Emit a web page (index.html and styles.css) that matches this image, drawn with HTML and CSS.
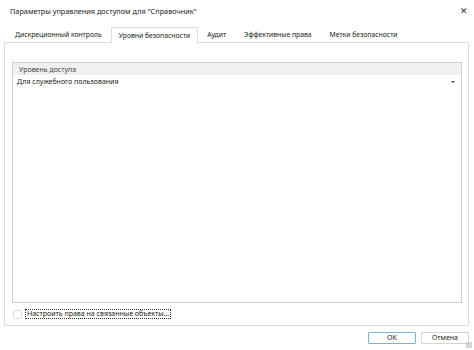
FILE: index.html
```html
<!DOCTYPE html>
<html lang="ru">
<head>
    <meta charset="UTF-8">
    <title>Параметры управления доступом</title>
    <link rel="stylesheet" href="styles.css">
</head>
<body>
<div class="dialog">
    <div class="titlebar">
        <span class="title">Параметры управления доступом для "Справочник"</span>
        <span class="close">&#x2715;</span>
    </div>

    <div class="tabs">
        <span class="tab">Дискреционный контроль</span>
        <span class="tab active">Уровни безопасности</span>
        <span class="tab">Аудит</span>
        <span class="tab">Эффективные права</span>
        <span class="tab">Метки безопасности</span>
    </div>

    <div class="panel">
        <div class="grid">
            <div class="grid-header">Уровень доступа</div>
            <div class="grid-row">
                <span>Для служебного пользования</span>
                <span class="arrow"></span>
            </div>
        </div>
        <label class="check">
            <span class="box"></span>
            <span class="focus">Настроить права на связанные объекты...</span>
        </label>
    </div>

    <div class="buttons">
        <button class="btn default">OK</button>
        <button class="btn">Отмена</button>
    </div>
    <span class="grip"></span>
</div>
</body>
</html>
```

FILE: styles.css
```css
/* dialog window */
body {
    margin: 0;
    background: #fff;
    font-family: "Noto Sans", "Open Sans", sans-serif;
    font-size: 7px;
    color: #1a1a1a;
}
.dialog {
    width: 474px;
    height: 350px;
    display: flex;
    flex-direction: column;
    position: relative;
}
.titlebar {
    display: flex;
    justify-content: space-between;
    align-items: center;
    height: 21px;
    padding: 0 6px 0 10px;
    font-size: 7.3px;
}
.close {
    font-size: 9px;
    color: #333;
}
.tabs {
    display: flex;
    margin: 6px 0 0 6px;
    height: 15px;
    align-items: stretch;
    white-space: nowrap;
    font-size: 6.8px;
}
.tab {
    display: flex;
    align-items: center;
    padding: 0 9px 0 9px;
}
.tab.active {
    border: 1px solid #dcdcdc;
    border-bottom: none;
    background: #fff;
    padding: 0 7px;
    margin: 0 0 -1px 0;
    position: relative;
    z-index: 1;
}
.panel {
    margin: 0 5px 0 4px;
    border: 1px solid #dcdcdc;
    height: 284px;
    box-sizing: border-box;
    padding: 19px 6px 0 7px;
    display: flex;
    flex-direction: column;
}
.grid {
    border: 1px solid #d0d0d0;
    height: 241px;
    box-sizing: border-box;
}
.grid-header {
    background: #f0f0f0;
    height: 12px;
    line-height: 13px;
    padding-left: 6px;
    color: #444;
}
.grid-row {
    display: flex;
    justify-content: space-between;
    align-items: center;
    height: 13px;
    padding: 0 6px 0 4px;
}
.arrow {
    width: 0;
    height: 0;
    border-left: 2px solid transparent;
    border-right: 2px solid transparent;
    border-top: 2px solid #444;
}
.check {
    display: flex;
    align-items: center;
    margin-top: 6px;
    gap: 3px;
}
.box {
    width: 7px;
    height: 7px;
    border: 1px solid #dcdcdc;
    border-radius: 2px;
    margin-left: 1px;
}
.focus {
    border: 1px dotted #333;
    padding: 0 1px;
    line-height: 8px;
}
.buttons {
    display: flex;
    justify-content: flex-end;
    gap: 5px;
    margin: 6px 5px 0 0;
}
.btn {
    width: 48px;
    height: 12px;
    font-family: inherit;
    font-size: 7px;
    line-height: 10px;
    background: #fff;
    border: 1px solid #d4d4d4;
    border-radius: 1px;
    padding: 0;
    color: #1a1a1a;
}
.btn.default {
    border-color: #7fb2d8;
}
.grip {
    position: absolute;
    right: 2px;
    bottom: 2px;
    width: 6px;
    height: 6px;
    background: radial-gradient(circle, #aaa 0.6px, transparent 0.8px) 0 0 / 2px 2px;
}
```
